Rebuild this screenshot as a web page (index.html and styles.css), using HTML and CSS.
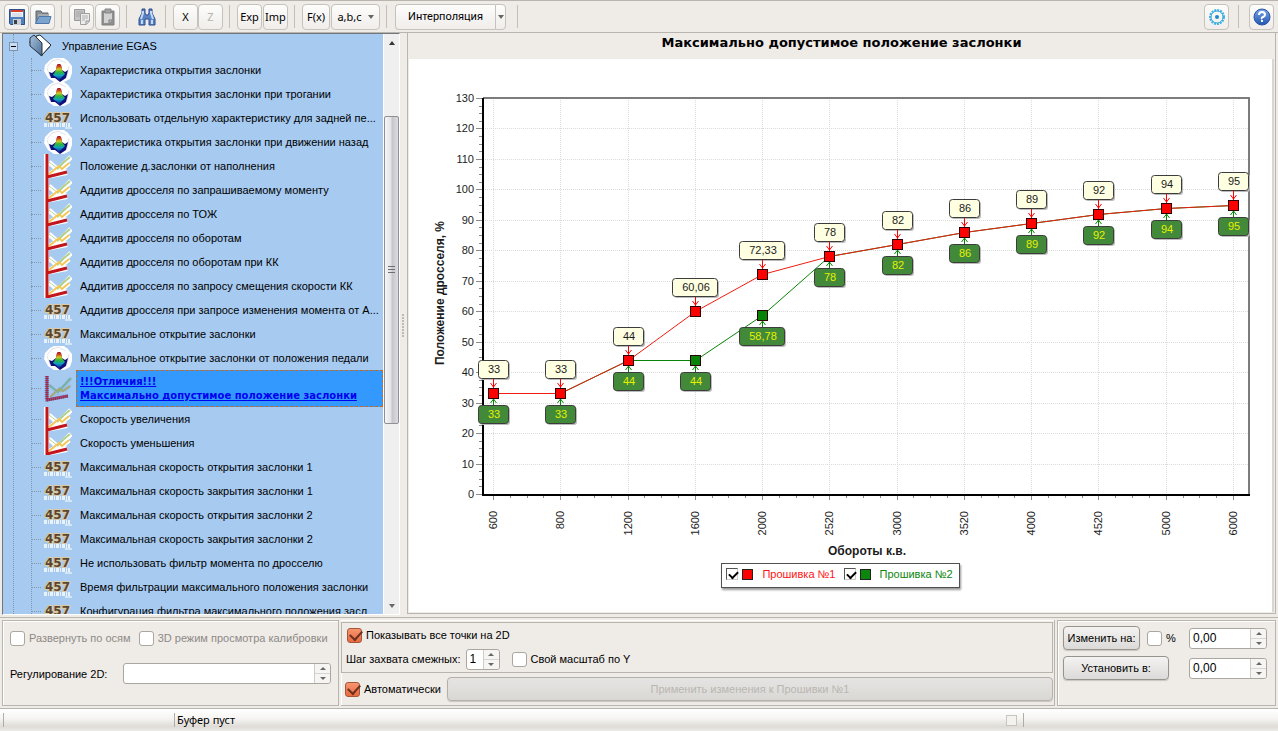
FILE: index.html
```html
<!DOCTYPE html>
<html lang="ru">
<head>
<meta charset="utf-8">
<title>Максимально допустимое положение заслонки</title>
<link rel="stylesheet" href="styles.css">
</head>
<body>
<svg class="defs" aria-hidden="true">
  <defs>
    <linearGradient id="peak" x1="0" y1="0" x2="0" y2="1">
      <stop offset="0" stop-color="#b01010"/><stop offset=".15" stop-color="#d84010"/><stop offset=".32" stop-color="#d8c820"/>
      <stop offset=".5" stop-color="#30b830"/><stop offset=".72" stop-color="#10a0c0"/><stop offset="1" stop-color="#1020a0"/>
    </linearGradient>
    <linearGradient id="steel" x1="0" y1="0" x2="1" y2="1">
      <stop offset="0" stop-color="#a8c4de"/><stop offset="1" stop-color="#4a6d94"/>
    </linearGradient>
    <linearGradient id="help" x1="0" y1="0" x2="0" y2="1">
      <stop offset="0" stop-color="#7aa5e6"/><stop offset="1" stop-color="#2156b4"/>
    </linearGradient>
    <symbol id="surface" viewBox="0 0 28 24">
      <path d="M6 2 10 0H20L24 3 28 8V15L26 21 20 24H10L4 20 0 13 1 7Z" fill="#fff"/>
      <path d="M8 3 14 1 22 5M3 9 8 3M3 10 6 18M25 8 23 18" fill="none" stroke="#dde3ea"/>
      <path d="M5 14 8 15 12 12 13 7Q15 5 17 7L18 12 21 14 24 12 22 20 16 24 11 20 7 20Z" fill="#10107c"/>
      <path d="M9 17 12 12 13 7Q15 5 17 7L18 12 21 16 18 19 15 22 12 19Z" fill="url(#peak)"/>
    </symbol>
    <symbol id="number" viewBox="0 0 28 24">
      <path d="M0 18H26M0 20H26" stroke="#e9f1fa" stroke-width="2" stroke-dasharray="3 1 1 1"/>
      <path d="M21 22H28" stroke="#fff"/>
      <text x="1" y="16" class="number-glyph">457</text>
    </symbol>
    <symbol id="curve" viewBox="0 0 28 24">
      <path d="M2 0V22L23 18" fill="none" stroke="#fff" stroke-width="6"/>
      <path d="M5 8 14 16 27 3M5 21 15 14 19 14 25 9" fill="none" stroke="#fff" stroke-width="5"/>
      <path d="M5 8 14 15" fill="none" stroke="#b9d49a"/>
      <path d="M13 15 20 8 26 3" fill="none" stroke="#aed088" stroke-width="2"/>
      <path d="M5 20 15 12 18 15 25 9" fill="none" stroke="#f6c652" stroke-width="2"/>
      <path d="M3 0V23L23 18" fill="none" stroke="#c4141c" stroke-width="3"/>
    </symbol>
    <symbol id="curve-selected" viewBox="0 0 28 28">
      <path d="M2 1V25L24 20M5 10 14 18 27 3M7 23 16 14 20 16 27 10" fill="none" stroke="#8ebbe8" stroke-width="4" stroke-dasharray="1 1"/>
      <path d="M5 10 14 17 27 3" fill="none" stroke="#78b0a0" stroke-width="2"/>
      <path d="M6 22 15 14 19 16 26 11" fill="none" stroke="#a6a874" stroke-width="2"/>
      <path d="M3 1V25L24 21" fill="none" stroke="#7c5c90" stroke-width="3"/>
      <path d="M3 1V25L24 21" fill="none" stroke="#b02040" stroke-width="3" stroke-dasharray="1 1"/>
    </symbol>
  </defs>
</svg>

<header class="toolbar">
  <button class="tool" aria-label="Сохранить">
    <svg width="18" height="18" viewBox="0 0 18 18"><path d="M1.500 1.500H16.500V16.500H2.500L1.500 15.500Z" fill="#4f80bd" stroke="#2c5088"/><path d="M3 2H15V9H3Z" fill="#f4f6fa"/><path d="M3 2H15V4H3Z" fill="#d9402c"/><path d="M4 6H14M4 8H14" stroke="#c3cbd6"/><path d="M5 11H13V17H5Z" fill="#c9cdd3"/><path d="M6 12H9V16H6Z" fill="#3a4046"/></svg>
  </button>
  <button class="tool" aria-label="Открыть">
    <svg width="18" height="18" viewBox="0 0 18 18"><path d="M2 15V3H7L8 5H14V9" fill="#8b8f94" stroke="#5d646c"/><path d="M4 6H14V9H4Z" fill="#a9adb2"/><path d="M1.500 15.500 5 8.500H17L15 15.500Z" fill="#7da3cf" stroke="#4d77aa"/></svg>
  </button>
  <span class="divider"></span>
  <button class="tool" disabled aria-label="Копировать">
    <svg width="18" height="18" viewBox="0 0 18 18"><path d="M1.500 1.500H11.500V12.500H1.500Z" fill="#c4c4c4" stroke="#9a9a9a"/><path d="M3 4H10M3 6H10M3 8H7" stroke="#a8a8a8"/><path d="M7.500 5.500H16.500V13L13.500 16.500H7.500Z" fill="#ececec" stroke="#a0a0a0"/><path d="M9 8H15M9 10H15M9 12H12" stroke="#b0b0b0"/><path d="M13 16V13H16" fill="none" stroke="#909090"/></svg>
  </button>
  <button class="tool" disabled aria-label="Вставить">
    <svg width="18" height="18" viewBox="0 0 18 18"><path d="M3 3H15V17H3Z" fill="#8e8e8e" stroke="#808080"/><path d="M5 5H13V12L10 15H5Z" fill="#d2d2d2"/><path d="M6 1H12V5H6Z" fill="#a2a2a2" stroke="#868686"/><path d="M10 15V12H13" fill="none" stroke="#777"/></svg>
  </button>
  <span class="divider"></span>
  <button class="tool flat" aria-label="Найти">
    <svg width="18" height="18" viewBox="0 0 18 18"><path d="M4 1H7V5L8 7H10L11 5V1H14V5L17 11V17H11V11H7V17H1V11L4 5Z" fill="#5b83c4" stroke="#2b4c90"/><path d="M5 3V5L3 11M13 3V5L15 11M4 12V16M14 12V16" fill="none" stroke="#c3d8f6" stroke-width="2"/></svg>
  </button>
  <span class="divider"></span>
  <div class="joined">
    <button class="tool">X</button>
    <button class="tool" disabled>Z</button>
  </div>
  <span class="divider"></span>
  <button class="tool">Exp</button>
  <button class="tool">Imp</button>
  <span class="divider"></span>
  <button class="tool function">F(x)</button>
  <button class="tool with-arrow">a,b,c <i class="arrow"></i></button>
  <span class="divider"></span>
  <div class="joined split">
    <button class="tool mode">Интерполяция</button>
    <button class="tool drop" aria-label="Выбрать режим"><i class="arrow"></i></button>
  </div>
  <span class="divider last"></span>
  <button class="tool settings" aria-label="Настройки">
    <svg width="18" height="18" viewBox="0 0 18 18"><circle cx="9" cy="9" r="7" fill="none" stroke="#45b2e2" stroke-width="2" stroke-dasharray="2 1"/><circle cx="9" cy="9" r="6" fill="none" stroke="#2fa6de"/><circle cx="9" cy="9" r="2" fill="#1c8bcc"/></svg>
  </button>
  <span class="divider"></span>
  <button class="tool" aria-label="Справка">
    <svg width="18" height="18" viewBox="0 0 18 18"><circle cx="9" cy="9" r="8" fill="url(#help)" stroke="#2a55a4"/><path d="M6 7Q6 4 9 4T12 7Q12 8 10 9T9 11M9 12V14" fill="none" stroke="#fff" stroke-width="2"/></svg>
  </button>
</header>

<main class="workspace">
  <nav class="tree-pane">
    <ul class="tree">
      <li class="root"><button class="toggle" aria-label="Свернуть"></button><svg width="24" height="24" viewBox="0 0 24 24"><path d="M1 8 9 2 22 13 13 22Z" fill="#24303c"/><path d="M8 2 12 1 23 11 14 21Z" fill="#fff" stroke="#1e2830"/><path d="M2 4 6 1 14 9V22L2 12Z" fill="url(#steel)" stroke="#26323e"/></svg><span>Управление EGAS</span></li>
      <li><svg class="icon"><use href="#surface"/></svg><span>Характеристика открытия заслонки</span></li>
      <li><svg class="icon"><use href="#surface"/></svg><span>Характеристика открытия заслонки при трогании</span></li>
      <li><svg class="icon"><use href="#number"/></svg><span>Использовать отдельную характеристику для задней пе...</span></li>
      <li><svg class="icon"><use href="#surface"/></svg><span>Характеристика открытия заслонки при движении назад</span></li>
      <li><svg class="icon"><use href="#curve"/></svg><span>Положение д.заслонки от наполнения</span></li>
      <li><svg class="icon"><use href="#curve"/></svg><span>Аддитив дросселя по запрашиваемому моменту</span></li>
      <li><svg class="icon"><use href="#curve"/></svg><span>Аддитив дросселя по ТОЖ</span></li>
      <li><svg class="icon"><use href="#curve"/></svg><span>Аддитив дросселя по оборотам</span></li>
      <li><svg class="icon"><use href="#curve"/></svg><span>Аддитив дросселя по оборотам при КК</span></li>
      <li><svg class="icon"><use href="#curve"/></svg><span>Аддитив дросселя по запросу смещения скорости КК</span></li>
      <li><svg class="icon"><use href="#number"/></svg><span>Аддитив дросселя при запросе изменения момента от А...</span></li>
      <li><svg class="icon"><use href="#number"/></svg><span>Максимальное открытие заслонки</span></li>
      <li><svg class="icon"><use href="#surface"/></svg><span>Максимальное открытие заслонки от положения педали</span></li>
      <li class="selected"><svg class="icon"><use href="#curve-selected"/></svg><a href="#chart">!!!Отличия!!!<br>Максимально допустимое положение заслонки</a></li>
      <li><svg class="icon"><use href="#curve"/></svg><span>Скорость увеличения</span></li>
      <li><svg class="icon"><use href="#curve"/></svg><span>Скорость уменьшения</span></li>
      <li><svg class="icon"><use href="#number"/></svg><span>Максимальная скорость открытия заслонки 1</span></li>
      <li><svg class="icon"><use href="#number"/></svg><span>Максимальная скорость закрытия заслонки 1</span></li>
      <li><svg class="icon"><use href="#number"/></svg><span>Максимальная скорость открытия заслонки 2</span></li>
      <li><svg class="icon"><use href="#number"/></svg><span>Максимальная скорость закрытия заслонки 2</span></li>
      <li><svg class="icon"><use href="#number"/></svg><span>Не использовать фильтр момента по дросселю</span></li>
      <li><svg class="icon"><use href="#number"/></svg><span>Время фильтрации максимального положения заслонки</span></li>
      <li><svg class="icon"><use href="#number"/></svg><span>Конфигурация фильтра максимального положения засл</span></li>
    </ul>
    <div class="scrollbar">
      <button aria-label="Вверх"><i class="arrow up"></i></button>
      <div class="track"><div class="thumb"></div></div>
      <button aria-label="Вниз"><i class="arrow"></i></button>
    </div>
  </nav>
  <div class="splitter"></div>
  <section class="chart-pane" id="chart">
    <h1>Максимально допустимое положение заслонки</h1>
    <div class="chart-body">
      <svg id="plot" class="plot" viewBox="0 0 863 504" role="img" aria-label="График положения дросселя от оборотов"></svg>
      <div class="legend">
        <label class="first"><input type="checkbox" checked><i class="key"></i>Прошивка №1</label>
        <label class="second"><input type="checkbox" checked><i class="key"></i>Прошивка №2</label>
      </div>
    </div>
  </section>
</main>

<section class="controls">
  <div class="panel view-panel">
    <div class="line">
      <label class="muted"><input type="checkbox" disabled>Развернуть по осям</label>
      <label class="muted"><input type="checkbox" disabled>3D режим просмотра калибровки</label>
    </div>
    <div class="line adjust">
      <label for="adjust">Регулирование 2D:</label>
      <div class="spin wide"><input id="adjust" type="text"><span class="steps"><button aria-label="Больше"></button><button aria-label="Меньше"></button></span></div>
    </div>
  </div>
  <div class="panel points-panel">
    <div class="points">
      <div class="line"><label><input type="checkbox" checked>Показывать все точки на 2D</label></div>
      <div class="line">
        <label for="step">Шаг захвата смежных:</label>
        <div class="spin tiny"><input id="step" type="text" value="1"><span class="steps"><button aria-label="Больше"></button><button aria-label="Меньше"></button></span></div>
        <label class="scale"><input type="checkbox">Свой масштаб по Y</label>
      </div>
    </div>
    <div class="line apply">
      <label><input type="checkbox" checked>Автоматически</label>
      <button class="push" disabled>Применить изменения к Прошивки №1</button>
    </div>
  </div>
  <div class="panel value-panel">
    <div class="line">
      <button class="push change">Изменить на:</button>
      <label><input type="checkbox">%</label>
      <div class="spin"><input type="text" value="0,00" aria-label="Изменить на"><span class="steps"><button aria-label="Больше"></button><button aria-label="Меньше"></button></span></div>
    </div>
    <div class="line">
      <button class="push assign">Установить в:</button>
      <div class="spin"><input type="text" value="0,00" aria-label="Установить в"><span class="steps"><button aria-label="Больше"></button><button aria-label="Меньше"></button></span></div>
    </div>
  </div>
</section>

<footer class="status">
  <span class="cell state"></span>
  <span class="cell buffer">Буфер пуст</span>
  <i class="flag"></i>
  <span class="cell tail"></span>
</footer>
<script src="chart.js"></script>
</body>
</html>
```

FILE: styles.css
```css
* { box-sizing: border-box; }

body {
  margin: 0;
  min-height: 100vh;
  display: flex;
  flex-direction: column;
  background: #efebe7;
  color: #000;
  font: 11px/14px "Liberation Sans", sans-serif;
}

button, input { font: inherit; color: inherit; margin: 0; }
button { padding: 0; }
.defs { position: absolute; width: 0; height: 0; }

/* toolbar */
.toolbar {
  display: flex;
  align-items: center;
  gap: 1px;
  height: 33px;
  padding: 0 4px;
  border-top: 1px solid #b8b4ae;
  border-bottom: 1px solid #b8b4ae;
  font: 11px/14px "Noto Sans", sans-serif;
}
.tool {
  display: flex;
  align-items: center;
  justify-content: center;
  width: 25px;
  height: 26px;
  border: 1px solid #c6c2bc;
  border-radius: 4px;
  background: linear-gradient(#fdfdfc, #f0edea);
  white-space: nowrap;
}
.tool:disabled { color: #b8b5b0; }
.tool.flat { width: 25px; border-color: transparent; background: none; }
.tool.function { width: 28px; }
.tool.with-arrow { width: 49px; gap: 6px; }
.tool.mode { width: 100px; font-family: Roboto, sans-serif; }
.tool.drop { width: 11px; }
.divider { width: 1px; height: 23px; margin: 0 6px 0 5px; background: #c2beb8; }
.divider.last { margin-left: 10px; }
.settings + .divider { margin: 0 9px 0 8px; }
.joined { display: flex; }
.split { margin-left: 1px; }
.split .mode { border-right: 0; border-radius: 4px 0 0 4px; }
.split .drop { border-radius: 0 4px 4px 0; }
.settings { margin-left: auto; }
.arrow { border: 3px solid transparent; border-top: 4px solid #6a6763; border-bottom: 0; }
.arrow.up { border-top: 0; border-bottom: 4px solid #333; }

/* tree */
.workspace { display: flex; flex: 1; min-height: 0; padding: 0 2px; }
.tree-pane {
  flex: none;
  width: 398px;
  display: flex;
  min-width: 0;
  height: 582px;
  border: 1px solid #73777c;
  border-right-color: #fff;
  border-bottom-color: #fff;
  background: #fff;
}
.tree {
  position: relative;
  flex: 1;
  min-width: 0;
  margin: 0;
  padding: 0;
  overflow: hidden;
  list-style: none;
  background: #a7caf0;
}
.tree::before, .tree::after {
  content: "";
  position: absolute;
  top: 0;
  bottom: 0;
  left: 10px;
  border-left: 1px dotted #8496ac;
}
.tree::after { top: 24px; left: 28px; }
.tree li {
  display: flex;
  align-items: center;
  height: 24px;
  padding-left: 28px;
  white-space: nowrap;
}
.tree li::before { content: ""; flex: none; width: 10px; margin-right: 3px; border-top: 1px dotted #8496ac; }
.tree li.root { padding-left: 6px; }
.tree li.root::before { display: none; }
.tree li.root span { margin-left: 10px; }
.toggle {
  position: relative;
  z-index: 1;
  width: 9px;
  height: 9px;
  margin-right: 10px;
  border: 1px solid #7f93ab;
  background: #c8def6 linear-gradient(#000, #000) center / 5px 1px no-repeat;
}
.icon { flex: none; width: 28px; height: 24px; }
.tree .icon + span { margin-left: 8px; }
.tree .selected { height: 37px; }
.selected .icon { height: 28px; }
.selected a {
  flex: 1;
  height: 37px;
  margin-left: 4px;
  padding: 4px 3px;
  border: 1px dashed #c86a1e;
  background: #3399ff;
  color: #0000f0;
  font: bold 10px/14px "DejaVu Sans", sans-serif;
}
.number-glyph { font: bold 12px "DejaVu Sans", sans-serif; fill: #5a4630; stroke: #dccba6; stroke-width: 2px; paint-order: stroke; }

.scrollbar { flex: none; width: 16px; display: flex; flex-direction: column; border-left: 1px solid #fff; background: #f0eff0; }
.scrollbar button { display: flex; align-items: center; justify-content: center; height: 17px; border: 0; background: none; }
.track { flex: 1; padding-top: 65px; }
.thumb {
  height: 308px;
  border: 1px solid #8e8f94;
  border-radius: 2px;
  background:
    repeating-linear-gradient(#6d6e72 0 1px, #fff0 1px 3px) center / 7px 9px no-repeat,
    linear-gradient(90deg, #f6f6f7, #e3e3e6 45%, #c5c5cb 55%, #dcdce0);
}
.splitter { width: 7px; background: radial-gradient(#8b8781 40%, transparent 45%) center / 2px 3px; background-clip: content-box; padding: 280px 3px 278px 2px; }

/* chart */
.chart-pane {
  flex: 1;
  display: flex;
  flex-direction: column;
  min-width: 0;
  border: 1px solid #b8b4ae;
  border-width: 0 1px 1px;
  margin-bottom: 1px;
  padding: 0 1px 1px;
}
.chart-pane h1 {
  height: 26px;
  margin: 0;
  font: bold 13px/20px "DejaVu Sans", sans-serif;
  text-align: center;
}
.chart-body { flex: 1; border-right: 2px solid #dad6d1; background: #fff; }
.plot { display: block; width: 100%; height: auto; font: 11px "Liberation Sans", sans-serif; }
.plot .axis-title { font-size: 12px; font-weight: bold; }
.plot .grid { stroke: #dcdcdc; stroke-dasharray: 1 1; }
.plot .tick { stroke: #8c8c8c; }
.plot text { fill: #1c1c1c; }
.plot .mark2 text { fill: #e6f000; }
.legend {
  display: flex;
  width: max-content;
  height: 25px;
  margin: 0 auto;
  padding: 0 6px 3px 4px;
  gap: 8px;
  border: 1px solid #505050;
  background: #fff;
  box-shadow: 1px 2px 2px #999;
  line-height: 20px;
}
.legend label { display: flex; align-items: center; }
.legend input {
  width: 12px;
  height: 12px;
  margin: 0 4px 0 0;
  appearance: none;
  border: 1px solid #555;
  border-right-color: #ccc;
  border-bottom-color: #ccc;
}
.legend input:checked::before {
  content: "";
  display: block;
  width: 7px;
  height: 4px;
  margin: 2px 0 0 2px;
  border: solid #000;
  border-width: 0 0 2px 2px;
  transform: rotate(-45deg);
}
.key { width: 11px; height: 11px; margin-right: 9px; border: 1px solid #222; background: currentColor; }
.first { color: #ff1414; }
.second { color: #0c860c; }
.first .key { background: #f00; }

/* controls */
.controls { display: flex; gap: 2px; height: 92px; padding: 2px; border-top: 1px solid #b8b4ae; border-bottom: 1px solid #b8b4ae; margin-top: 2px; }
.panel { border: 1px solid #b8b4ae; box-shadow: inset 1px 1px #fff; }
.line { display: flex; align-items: center; }
.panel label { display: flex; align-items: center; white-space: nowrap; }
.panel input[type=checkbox] {
  position: relative;
  flex: none;
  appearance: none;
  width: 15px;
  height: 15px;
  margin: 0 4px 0 0;
  border: 1px solid #aaa6a0;
  border-radius: 3px;
  background: #fff;
}
.panel input[type=checkbox]:checked { border-color: #a5563a; background: linear-gradient(#f79670, #e8693f); }
.panel input[type=checkbox]:checked::before {
  content: "";
  position: absolute;
  left: 2px;
  top: 1px;
  width: 10px;
  height: 6px;
  border: solid #6a3020;
  border-width: 0 0 2px 2px;
  transform: rotate(-48deg);
}
.muted { color: #8d8a86; }
.view-panel { flex: none; width: 337px; padding: 8px 7px; }
.view-panel .line:first-child { gap: 8px; height: 18px; }
.adjust { justify-content: space-between; margin-top: 16px; }
.spin {
  display: flex;
  width: 78px;
  height: 21px;
  border: 1px solid #aaa6a0;
  border-radius: 3px;
  background: #fff;
}
.spin.wide { width: 208px; }
.spin.tiny { width: 34px; margin: 0 12px 0 5px; }
.spin input { flex: 1; min-width: 0; width: 0; padding: 0 3px; border: 0; outline: 0; background: none; font-size: 12px; }
.steps { display: flex; flex-direction: column; width: 16px; border-left: 1px solid #d0ccc6; background: #f7f5f3; border-radius: 0 3px 3px 0; }
.steps button { flex: 1; display: flex; align-items: center; justify-content: center; border: 0; background: none; }
.steps button + button { border-top: 1px solid #d8d4ce; }
.steps button::before { content: ""; border: 3px solid transparent; border-top: 0; border-bottom: 3px solid #6b6864; }
.steps button + button::before { border-bottom: 0; border-top: 3px solid #6b6864; }
.points-panel { flex: 1; border-width: 0 1px 1px 0; }
.points { height: 51px; margin: 2px 1px 0 0; padding: 0 4px; border: 1px solid #b8b4ae; }
.points .line { height: 24px; }
.points .line:first-child { padding-left: 1px; }
.apply { height: 32px; padding: 0 1px 0 4px; gap: 6px; }
.push {
  height: 24px;
  border: 1px solid #97938d;
  border-radius: 4px;
  background: linear-gradient(#f4f3f2, #dcdad8);
  box-shadow: 0 1px 1px #c9c5bf;
}
.push:disabled { flex: 1; border-color: #b4b0aa; background: linear-gradient(#e6e4e2, #dad8d5); color: #b9b6b2; }
.value-panel { flex: 0 0 219px; padding: 2px 8px 4px 5px; }
.value-panel .line { height: 30px; justify-content: space-between; }
.change { width: 77px; }
.assign { width: 106px; }
.value-panel label { margin-right: 6px; }

/* status bar */
.status { display: flex; align-items: center; height: 22px; padding: 0 3px; background: linear-gradient(#fff 1px, #f6f5f3, #dfdcd7 80%, #eceae7); font-family: "Noto Sans", sans-serif; }
.cell { height: 14px; padding-left: 2px; border-left: 1px solid #b0aca6; }
.state { width: 171px; }
.buffer { flex: 1; }
.flag { width: 11px; height: 11px; margin-right: 6px; border: 1px solid #c8c5bf; background: #f4f2ef; }
.tail { width: 252px; }
```

FILE: chart.js
```js
const rpm = [600, 800, 1200, 1600, 2000, 2520, 3000, 3520, 4000, 4520, 5000, 6000];
const first = [33, 33, 44, 60.06, 72.33, 78, 82, 86, 89, 92, 94, 95];
const second = [33, 33, 44, 44, 58.78, 78, 82, 86, 89, 92, 94, 95];

const left = 74, top_ = 39, right = 840, bottom = 435;
const x = i => Math.round(84 + i * 740 / 11);
const y = v => Math.round(bottom - v * (bottom - top_) / 130);
const out = [];
const line = (x1, y1, x2, y2, attrs) =>
  out.push(`<line x1="${x1}" y1="${y1}" x2="${x2}" y2="${y2}" ${attrs}/>`);

for (let v = 0; v <= 130; v += 10) {
  const py = y(v) + 0.5;
  if (v) line(left, py, right, py, 'class="grid"');
  line(67, py, left, py, 'class="tick"');
  out.push(`<text x="65" y="${y(v) + 4}" text-anchor="end">${v}</text>`);
  for (let k = 1; k < 4 && v < 130; k++) {
    const my = y(v + k * 2.5) + 0.5;
    line(70, my, left, my, 'class="tick"');
  }
}
rpm.forEach((label, i) => {
  const px = x(i) + 0.5;
  line(px, top_, px, bottom, 'class="grid"');
  line(px, bottom, px, bottom + 6, 'class="tick"');
  for (let k = 1; k < 4 && i < 11; k++) {
    const mx = x(i + k / 4) + 0.5;
    line(mx, bottom, mx, bottom + 4, 'class="tick"');
  }
  out.push(`<text transform="translate(${x(i) + 4} 452) rotate(-90)" text-anchor="end">${label}</text>`);
});
out.push(`<path d="M${left} ${top_}H${right}V${bottom}" fill="none" stroke="#7c7c7c" stroke-width="2"/>`);
out.push(`<path d="M${left} ${top_}V${bottom + 1}H${right + 1}" fill="none" stroke="#000" stroke-width="2"/>`);
out.push('<text class="axis-title" transform="translate(35 234) rotate(-90)" text-anchor="middle">Положение дросселя, %</text>');
out.push('<text class="axis-title" x="458" y="496" text-anchor="middle">Обороты к.в.</text>');

function drawLine(values, color) {
  const points = values.map((v, i) => `${x(i) + 0.5},${y(v) + 0.5}`).join(' ');
  out.push(`<polyline points="${points}" fill="none" stroke="${color}"/>`);
}
function drawMarks(values, color, below) {
  values.forEach((v, i) => {
    const px = x(i), py = y(v), cx = px + 0.5;
    const text = String(v).replace('.', ',');
    const w = text.length > 2 ? 46 : 31;
    const bx = px - Math.floor(w / 2), by = below ? py + 12 : py - 33;
    const dir = below ? 1 : -1;
    const fill = below ? '#428a3a' : '#ffffe2';
    out.push(`<g class="mark${below ? 2 : 1}">
      <rect x="${bx + 2}" y="${by + 2}" width="${w - 1}" height="18" rx="3" fill="#bbb"/>
      <path d="M${cx} ${py + dir * 14}V${py + dir * 5}M${cx - 3} ${py + dir * 10}L${cx} ${py + dir * 6}L${cx + 3} ${py + dir * 10}" fill="none" stroke="${color}"/>
      <rect x="${bx + 0.5}" y="${by + 0.5}" width="${w - 1}" height="18" rx="3" fill="${fill}" stroke="#3c3c3c"/>
      <text x="${px + 1}" y="${by + 13}" text-anchor="middle">${text}</text>
      <rect x="${px - 4.5}" y="${py - 4.5}" width="10" height="10" fill="${color}" stroke="#2c0000"/></g>`);
  });
}
drawLine(second, '#078407');
drawLine(first, '#f01c10');
drawMarks(second, '#078407', true);
drawMarks(first, '#ff0000', false);
document.getElementById('plot').innerHTML = out.join('');
```
